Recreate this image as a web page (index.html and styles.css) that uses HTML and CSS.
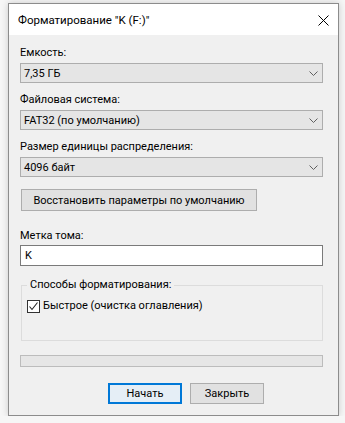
FILE: index.html
```html
<!DOCTYPE html>
<html lang="ru">
<head>
    <meta charset="UTF-8">
    <meta name="viewport" content="width=device-width, initial-scale=1.0">
    <title>Форматирование</title>
    <link rel="stylesheet" href="styles.css">
</head>
<body>

    <div class="window">
        <!-- Заголовок окна -->
        <div class="titlebar">
            <span class="title">Форматирование "K (F:)"</span>
            <svg class="close" width="11" height="11" viewBox="0 0 11 11">
                <path d="M0.5 0.5L10.5 10.5M10.5 0.5L0.5 10.5" stroke="#000" stroke-width="1" fill="none"/>
            </svg>
        </div>

        <div class="content">
            <div class="label">Емкость:</div>
            <div class="select">
                <span>7,35 ГБ</span>
                <svg class="chevron" width="9" height="5" viewBox="0 0 9 5"><path d="M0.5 0.5L4.5 4.5L8.5 0.5" stroke="#606060" fill="none"/></svg>
            </div>

            <div class="label">Файловая система:</div>
            <div class="select">
                <span>FAT32 (по умолчанию)</span>
                <svg class="chevron" width="9" height="5" viewBox="0 0 9 5"><path d="M0.5 0.5L4.5 4.5L8.5 0.5" stroke="#606060" fill="none"/></svg>
            </div>

            <div class="label">Размер единицы распределения:</div>
            <div class="select">
                <span>4096 байт</span>
                <svg class="chevron" width="9" height="5" viewBox="0 0 9 5"><path d="M0.5 0.5L4.5 4.5L8.5 0.5" stroke="#606060" fill="none"/></svg>
            </div>

            <button class="btn btn-restore">Восстановить параметры по умолчанию</button>

            <div class="label label-volume">Метка тома:</div>
            <div class="textbox">K</div>

            <fieldset class="group">
                <legend>Способы форматирования:</legend>
                <label class="check">
                    <span class="box">
                        <svg width="11" height="11" viewBox="0 0 11 11"><path d="M1.5 5.5L4 8.5L9.5 1.5" stroke="#222" stroke-width="1.1" fill="none"/></svg>
                    </span>
                    Быстрое (очистка оглавления)
                </label>
            </fieldset>

            <div class="progress"></div>

            <div class="actions">
                <button class="btn btn-default">Начать</button>
                <button class="btn">Закрыть</button>
            </div>
        </div>
    </div>

</body>
</html>
```

FILE: styles.css
```css
/* Диалог форматирования */
body {
    margin: 0;
    background-color: #f6f6f6;
    font-family: Roboto, "Noto Sans", sans-serif;
    font-size: 11px;
    color: #000;
}

.window {
    box-sizing: border-box;
    width: 331px;
    height: 413px;
    margin: 3px 0 0 8px;
    border: 1px solid #8c8c8c;
    background-color: #f0f0f0;
    box-shadow: 0 0 7px rgba(0, 0, 0, 0.18);
}

.titlebar {
    height: 31px;
    background-color: #fff;
    display: flex;
    align-items: center;
    justify-content: space-between;
    padding: 0 9px 0 9px;
}

.title {
    font-size: 11.5px;
}

.close {
    display: block;
    margin-top: 1px;
}

.content {
    padding: 10px 15px 0 11px;
}

.label {
    height: 16px;
    line-height: 16px;
    margin-bottom: 2px;
}

.select + .label {
    margin-top: 9px;
}

.select {
    box-sizing: border-box;
    height: 20px;
    border: 1px solid #adadad;
    background-color: #e5e5e5;
    display: flex;
    align-items: center;
    justify-content: space-between;
    padding: 1px 4px 0 3px;
}

.btn {
    box-sizing: border-box;
    font-family: inherit;
    font-size: 11px;
    color: #000;
    background-color: #e1e1e1;
    border: 1px solid #adadad;
    padding: 0;
    margin: 0;
}

.btn-restore {
    display: block;
    width: 236px;
    height: 22px;
    margin: 12px 0 0 1px;
}

.label-volume {
    margin-top: 17px;
    margin-bottom: 1px;
}

.textbox {
    box-sizing: border-box;
    height: 21px;
    width: 303px;
    border: 1px solid #7a7a7a;
    background-color: #fff;
    padding: 0 4px;
    line-height: 19px;
}

.group {
    box-sizing: border-box;
    height: 64px;
    margin: 11px 0 0 1px;
    padding: 5px 0 0 5px;
    border: 1px solid #dcdcdc;
}

.group legend {
    padding: 0 3px;
    line-height: 16px;
}

.check {
    display: flex;
    align-items: center;
    gap: 3px;
    line-height: 16px;
}

.box {
    box-sizing: border-box;
    width: 13px;
    height: 13px;
    border: 1px solid #333;
    background-color: #fff;
    display: flex;
    align-items: center;
    justify-content: center;
}

.box svg {
    display: block;
}

.progress {
    box-sizing: border-box;
    height: 12px;
    margin-top: 14px;
    border: 1px solid #bcbcbc;
    background-color: #e6e6e6;
}

.actions {
    display: flex;
    gap: 8px;
    margin-top: 16px;
    padding-left: 88px;
}

.actions .btn {
    width: 74px;
    height: 21px;
}

.btn-default {
    border: 1px solid #0078d7;
    box-shadow: inset 0 0 0 1px #0078d7;
    background-color: #e5eef6;
}
```
